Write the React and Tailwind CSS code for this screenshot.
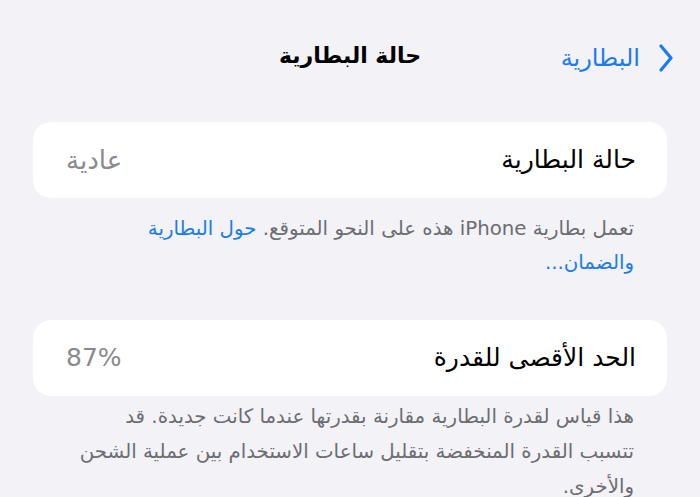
export default function App() {
  return (
    <div dir="rtl" className="w-[700px] h-[497px] overflow-hidden bg-[#f2f2f7]" style={{ fontFamily: '"DejaVu Sans", sans-serif' }}>
      <div className="relative h-[115px] flex items-start justify-center pt-[40px]">
        <div className="text-[22px] font-bold text-black leading-[32px]">حالة البطارية</div>
        <div className="absolute right-[26px] top-[42px] flex items-center gap-[18px] text-[#1a7cf0]">
          <svg width="16" height="28" viewBox="0 0 16 28" fill="none">
            <path d="M3 2 L13 14 L3 26" stroke="#1a7cf0" strokeWidth="3.2" strokeLinecap="round" strokeLinejoin="round" />
          </svg>
          <span className="text-[24px] leading-[32px]">البطارية</span>
        </div>
      </div>
      <div className="mt-[7px] mx-[33px] h-[76px] rounded-[18px] bg-white flex items-center justify-between pr-[31px] pl-[33px]">
        <span className="text-[25px] text-black">حالة البطارية</span>
        <span className="text-[26px] text-[#8a8a8e]">عادية</span>
      </div>
      <div className="mt-[14px] pr-[66px] pl-[40px] text-[19.8px] leading-[34px] text-[#6d6d72] whitespace-nowrap">
        تعمل بطارية iPhone هذه على النحو المتوقع. <span className="text-[#1a7cf0]">حول البطارية</span>
        <br />
        <span className="text-[#1a7cf0]">والضمان...</span>
      </div>
      <div className="mt-[40px] mx-[33px] h-[76px] rounded-[18px] bg-white flex items-center justify-between pr-[31px] pl-[33px]">
        <span className="text-[25px] text-black">الحد الأقصى للقدرة</span>
        <span className="text-[25px] text-[#8a8a8e]">87%</span>
      </div>
      <div className="mt-[3px] pr-[66px] pl-[40px] text-[19.8px] leading-[35px] text-[#6d6d72] whitespace-nowrap">
        هذا قياس لقدرة البطارية مقارنة بقدرتها عندما كانت جديدة. قد
        <br />
        تتسبب القدرة المنخفضة بتقليل ساعات الاستخدام بين عملية الشحن
        <br />
        والأخرى.
      </div>
    </div>
  );
}
